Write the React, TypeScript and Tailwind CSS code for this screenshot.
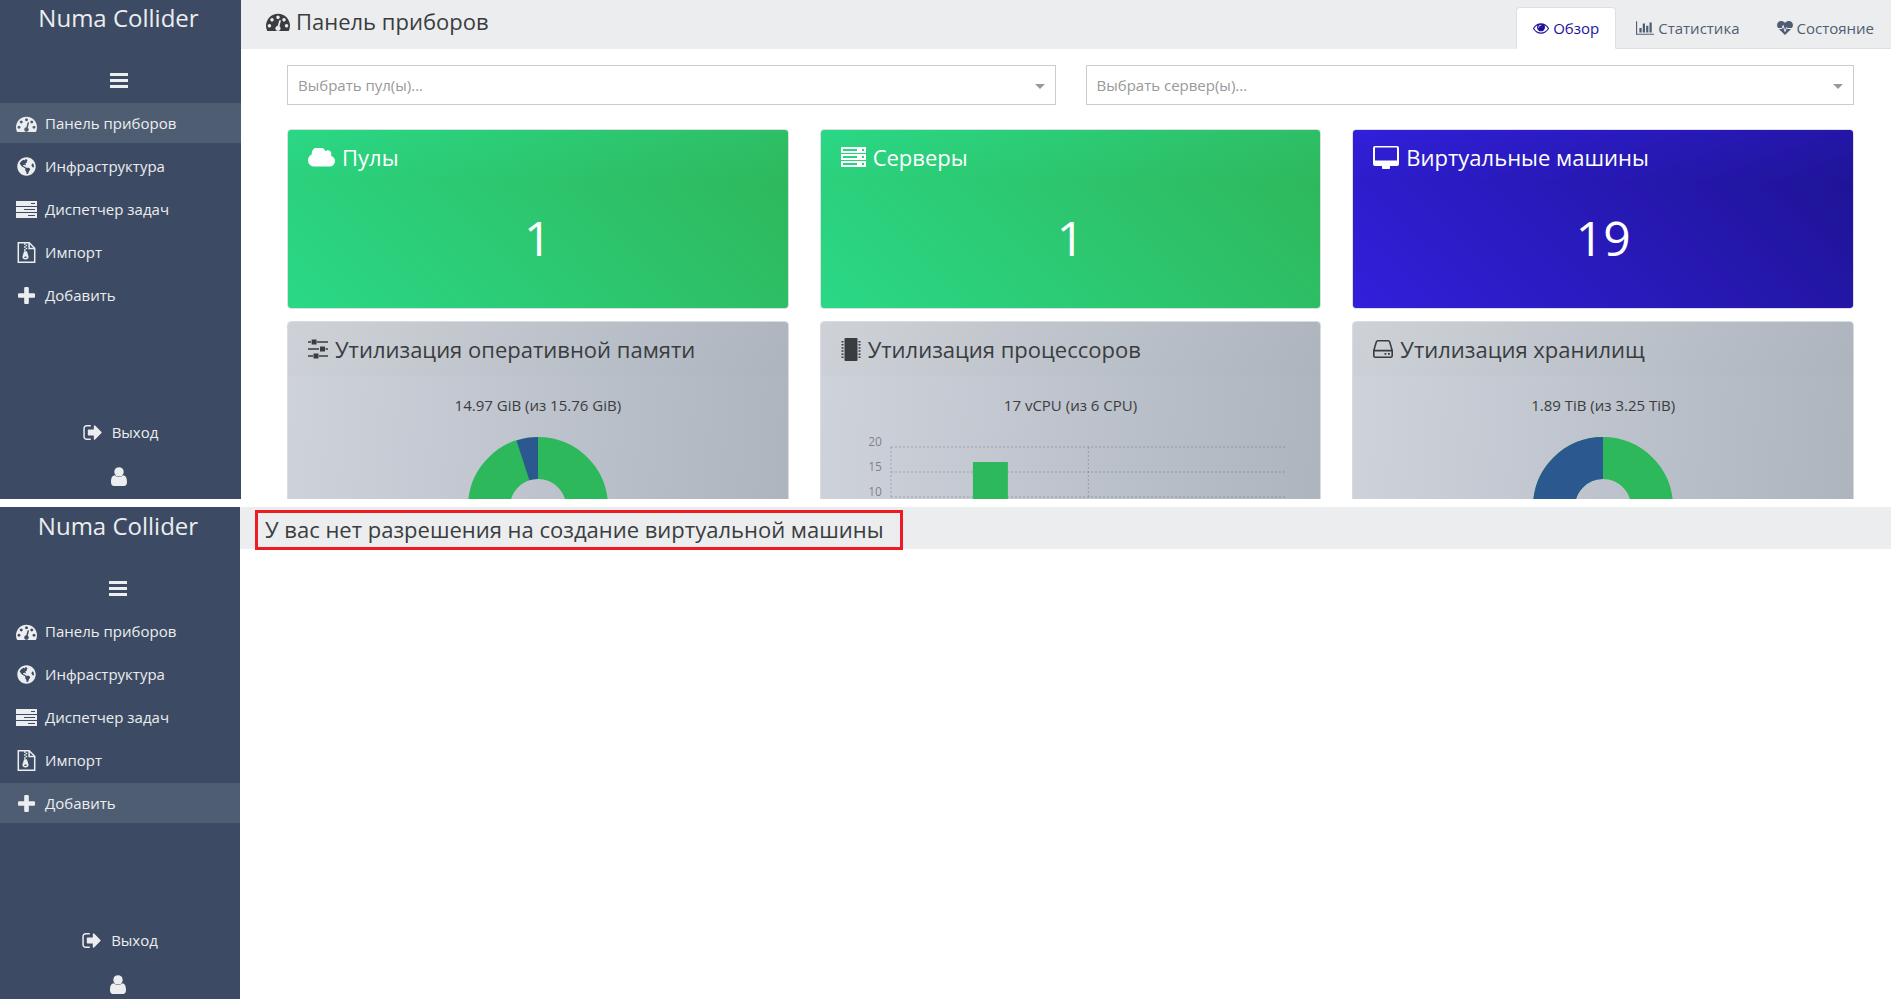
import type { ReactNode } from 'react';
import { FaGlobeAmericas } from 'react-icons/fa';

type IconProps = { className?: string };

const TachometerIcon = ({ className }: IconProps) => (
  <svg viewBox="0 128 1792 1408" className={className} fill="currentColor" aria-hidden="true">
    <path d="M384 1152q0-53-37.5-90.5t-90.5-37.5-90.5 37.5-37.5 90.5 37.5 90.5 90.5 37.5 90.5-37.5 37.5-90.5zm192-448q0-53-37.5-90.5t-90.5-37.5-90.5 37.5-37.5 90.5 37.5 90.5 90.5 37.5 90.5-37.5 37.5-90.5zm428 481l101-382q6-26-7.5-48.5t-38.5-29.5-48 6.5-30 39.5l-101 382q-60 5-107 43.5t-63 98.5q-20 77 20 146t117 89 146-20 89-117q16-60-6-117t-72-91zm660-33q0-53-37.5-90.5t-90.5-37.5-90.5 37.5-37.5 90.5 37.5 90.5 90.5 37.5 90.5-37.5 37.5-90.5zm-640-640q0-53-37.5-90.5t-90.5-37.5-90.5 37.5-37.5 90.5 37.5 90.5 90.5 37.5 90.5-37.5 37.5-90.5zm448 192q0-53-37.5-90.5t-90.5-37.5-90.5 37.5-37.5 90.5 37.5 90.5 90.5 37.5 90.5-37.5 37.5-90.5zm320 448q0 261-141 483-19 29-54 29h-1402q-35 0-54-29-141-221-141-483 0-182 71-348t191-286 286-191 348-71 348 71 286 191 191 286 71 348z" />
  </svg>
);

const TasksIcon = ({ className }: IconProps) => (
  <svg viewBox="0 0 21 17" className={className} fill="currentColor" fillRule="evenodd" aria-hidden="true">
    <path d="M0 0h21v5H0zM15 2v1h4V2zM0 6h21v5H0zM8 8v1h11V8zM0 12h21v5H0zM12 14v1h7v-1z" />
  </svg>
);

const ArchiveIcon = ({ className }: IconProps) => (
  <svg viewBox="0 0 18 21" className={className} fill="none" stroke="currentColor" strokeWidth="1.5" aria-hidden="true">
    <path d="M.8.8h10.9l5.5 5.4v14H.8z" />
    <path d="M11.6 1v5.4h5.4" />
    <path d="M6.5 2h1.6M8.1 3.5h1.6M6.5 5h1.6M8.1 6.5h1.6M6.5 8h1.6" />
    <path d="M6.6 9.3h2.8l1.6 5.2c.4 1.700-.9 3-3 3s-3.400-1.300-3-3z" fill="currentColor" stroke="none" />
    <ellipse cx="8" cy="15.200" rx="1.400" ry=".8" fill="#3c4b63" stroke="none" />
  </svg>
);

const PlusIcon = ({ className }: IconProps) => (
  <svg viewBox="192 128 1408 1408" className={className} fill="currentColor" aria-hidden="true">
    <path d="M1600 736v192q0 40-28 68t-68 28h-416v416q0 40-28 68t-68 28h-192q-40 0-68-28t-28-68v-416h-416q-40 0-68-28t-28-68v-192q0-40 28-68t68-28h416v-416q0-40 28-68t68-28h192q40 0 68 28t28 68v416h416q40 0 68 28t28 68z" />
  </svg>
);

const BarsIcon = () => (
  <svg viewBox="0 0 18 15" className="h-[15px] w-[18px]" fill="currentColor" aria-hidden="true">
    <path d="M0 0h18v3H0zM0 6h18v3H0zM0 12h18v3H0z" />
  </svg>
);

const SignOutIcon = () => (
  <svg viewBox="64 256 1568 1280" className="h-[15px] w-[19px]" fill="currentColor" aria-hidden="true">
    <path d="M704 1440q0 4 1 20t.5 26.5-3 23.5-10 19.5-20.5 6.5h-320q-119 0-203.5-84.5t-84.5-203.5v-704q0-119 84.5-203.5t203.5-84.5h320q13 0 22.5 9.5t9.5 22.5q0 4 1 20t.5 26.5-3 23.5-10 19.5-20.5 6.5h-320q-66 0-113 47t-47 113v704q0 66 47 113t113 47h312l11.5 1 11.5 3 8 5.5 7 9 2 13.5zm928-544q0 26-19 45l-544 544q-19 19-45 19t-45-19-19-45v-288h-448q-26 0-45-19t-19-45v-384q0-26 19-45t45-19h448v-288q0-26 19-45t45-19 45 19l544 544q19 19 19 45z" />
  </svg>
);

const UserIcon = () => (
  <svg viewBox="0 0 16 19" className="h-[19px] w-4" fill="currentColor" aria-hidden="true">
    <circle cx="8" cy="4.9" r="4.7" />
    <path d="M3.8 8.2C1 8.5 0 11 0 15.300 0 17.500 1.200 19 3 19h10c1.800 0 3-1.500 3-3.700 0-4.300-1-6.800-3.800-7.100a6 6 0 0 1-8.400 0z" />
  </svg>
);

const EyeIcon = () => (
  <svg viewBox="0 384 1792 1152" className="h-[11px] w-4" fill="currentColor" aria-hidden="true">
    <path d="M1664 960q-152-236-381-353 61 104 61 225 0 185-131.5 316.5t-316.5 131.5-316.5-131.5-131.5-316.5q0-121 61-225-229 117-381 353 133 205 333.5 326.5t434.5 121.5 434.5-121.5 333.5-326.5zm-720-384q0-20-14-34t-34-14q-125 0-214.5 89.5t-89.5 214.5q0 20 14 34t34 14 34-14 14-34q0-86 61-147t147-61q20 0 34-14t14-34zm848 384q0 34-20 69-140 230-376.5 368.5t-499.5 138.5-499.5-139-376.5-368q-20-35-20-69t20-69q140-229 376.5-368t499.5-139 499.5 139 376.5 368q20 35 20 69z" />
  </svg>
);

const BarChartIcon = () => (
  <svg viewBox="0 128 2048 1536" className="h-[14px] w-[18px]" fill="currentColor" aria-hidden="true">
    <path d="M640 896v512h-256v-512h256zm384-512v1024h-256v-1024h256zm1024 1152v128h-2048v-1536h128v1408h1920zm-640-896v768h-256v-768h256zm384-384v1152h-256v-1152h256z" />
  </svg>
);

const HeartbeatIcon = () => (
  <svg viewBox="0 0 16 14" className="h-[14px] w-4" aria-hidden="true">
    <path d="M8 14 1.6 7.8C-.5 5.5-.3 2.7 1.2 1.2 3-.5 6-.3 8 2c2-2.300 5-2.500 6.800-.8 1.500 1.500 1.700 4.300-.4 6.600z" fill="currentColor" />
    <path d="M1 7.500h4l1.200-3 1.800 6 1.700-4 .8 1H15" fill="none" stroke="#ecedef" strokeWidth="1" />
  </svg>
);

const CloudIcon = () => (
  <svg viewBox="64 256 1920 1280" className="h-[19px] w-[27px]" fill="currentColor" aria-hidden="true">
    <path d="M1984 1152q0 159-112.5 271.5t-271.5 112.5h-1088q-185 0-316.5-131.5t-131.5-316.5q0-132 71-241.5t187-163.5q-2-28-2-43 0-212 150-362t362-150q158 0 286.5 88t187.5 230q70-62 166-62 106 0 181 75t75 181q0 75-41 138 129 30 213 134.5t84 239.5z" />
  </svg>
);

const ServerIcon = () => (
  <svg viewBox="0 0 25 20" className="h-5 w-[25px]" fill="currentColor" fillRule="evenodd" aria-hidden="true">
    <path d="M0 0h25v6H0zM2 2v2h14V2zM21 2v2h2V2zM0 7h25v6H0zM2 9v2h14V9zM21 9v2h2V9zM0 14h25v6H0zM2 16v2h14v-2zM21 16v2h2v-2z" />
  </svg>
);

const DesktopIcon = () => (
  <svg viewBox="0 0 26 23" className="h-[23px] w-[26px]" fill="currentColor" fillRule="evenodd" aria-hidden="true">
    <path d="M2 0h22a2 2 0 0 1 2 2v16a2 2 0 0 1-2 2h-7v2.2a.8.8 0 0 1-.8.8H9.8a.8.8 0 0 1-.8-.8V20H2a2 2 0 0 1-2-2V2a2 2 0 0 1 2-2zm0 1.6v12.900h22V1.600z" />
  </svg>
);

const SlidersIcon = () => (
  <svg viewBox="0 0 20 20" className="h-5 w-5" fill="currentColor" aria-hidden="true">
    <path d="M0 2.200h3v1.600H0zM9 2.200h11v1.600H9zM3.600.5h5v5h-5zM0 9.200h11v1.600H0zM17.500 9.200H20v1.600h-2.500zM12 7.500h5v5h-5zM0 16.200h5v1.600H0zM11 16.200h9v1.600h-9zM5.500 14.500h5v5h-5z" />
  </svg>
);

const MicrochipIcon = () => (
  <svg viewBox="0 0 20 23" className="h-[23px] w-5" fill="currentColor" aria-hidden="true">
    <rect x="3.5" width="13" height="23" rx="1" />
    <path d="M1.500 3v17M18.500 3v17" stroke="currentColor" strokeWidth="2" strokeDasharray="1.500 1.600" />
  </svg>
);

const HddIcon = () => (
  <svg viewBox="0 0 20 18" className="h-[18px] w-5" fill="none" stroke="currentColor" strokeWidth="1.6" aria-hidden="true">
    <path d="M.8 10.500v5.200c0 1 .5 1.500 1.500 1.500h15.400c1 0 1.500-.5 1.500-1.500v-5.200L16.700 2c-.3-.8-.8-1.200-1.600-1.200H4.900c-.8 0-1.300.4-1.600 1.200zM.8 10.600h18.400" />
    <path d="M11.500 13.900h1.800M15 13.900h1.800" strokeWidth="1.8" />
  </svg>
);

const menu = [
  { label: 'Панель приборов', icon: <TachometerIcon className="h-[17px] w-[21px]" /> },
  { label: 'Инфраструктура', icon: <FaGlobeAmericas className="size-[19px]" /> },
  { label: 'Диспетчер задач', icon: <TasksIcon className="h-[17px] w-[21px]" /> },
  { label: 'Импорт', icon: <ArchiveIcon className="h-[21px] w-[19px]" /> },
  { label: 'Добавить', icon: <PlusIcon className="size-[17px]" /> },
];

const Sidebar = ({ active, className }: { active: string; className: string }) => (
  <nav className={`flex shrink-0 flex-col bg-[#3c4b63] text-[#ecedef] ${className}`}>
    <div className="pr-1 text-center text-2xl leading-9">Numa Collider</div>
    <div className="mt-7 flex h-8 justify-center pr-1">
      <button type="button" aria-label="Меню" className="flex size-8 items-center justify-center">
        <BarsIcon />
      </button>
    </div>
    <ul className="mt-[7px] flex flex-col gap-[3px]">
      {menu.map((item) => (
        <li key={item.label}>
          <a
            href="#"
            className={`flex h-10 items-center pl-4 text-[15px] ${item.label === active ? 'bg-[#4f5d73]' : ''}`}
          >
            <span className="mr-2 flex w-[21px] justify-center">{item.icon}</span>
            {item.label}
          </a>
        </li>
      ))}
    </ul>
    <div className="mt-[97px] flex flex-col items-center">
      <a href="#" className="flex h-10 items-center gap-[10px] text-[15px]">
        <SignOutIcon />
        Выход
      </a>
      <button type="button" aria-label="Пользователь" className="mt-1 mr-1 flex h-10 items-center">
        <UserIcon />
      </button>
    </div>
  </nav>
);

const Tab = ({ icon, label, active }: { icon: ReactNode; label: string; active?: boolean }) => (
  <button
    type="button"
    role="tab"
    aria-selected={!!active}
    className={`-mb-px flex h-[42px] items-center gap-1 rounded-t border px-4 text-[15px] ${
      active ? 'border-[#dddfe2] border-b-white bg-white text-[#20129a]' : 'border-transparent text-[#4f5d73]'
    }`}
  >
    {icon}
    {label}
  </button>
);

const Filter = ({ label, placeholder }: { label: string; placeholder: string }) => (
  <div className="relative">
    <select
      aria-label={label}
      className="h-10 w-full appearance-none border border-[#ccc] bg-white px-[10px] text-[15px] text-[#999]"
    >
      <option>{placeholder}</option>
    </select>
    <span className="pointer-events-none absolute top-[19px] right-[11px] border-x-[5px] border-t-[5px] border-x-transparent border-t-[#999]" />
  </div>
);

const CountCard = ({ icon, title, count, tone }: { icon: ReactNode; title: string; count: number; tone: 'green' | 'blue' }) => (
  <div className="flex h-[180px] flex-col overflow-hidden rounded border border-[#dddfe2] text-white">
    <h3
      className={`flex h-[54px] items-center gap-[7px] px-5 text-[22px] ${
        tone === 'green' ? 'bg-linear-160 from-[#2ad886] to-[#2eb85c]' : 'bg-linear-160 from-[#321fdb] to-[#1f1498]'
      }`}
    >
      {icon}
      {title}
    </h3>
    <p
      className={`flex-1 pt-[30px] text-center text-5xl ${
        tone === 'green' ? 'bg-linear-45 from-[#2ad886] to-[#2eb85c]' : 'bg-linear-45 from-[#321fdb] to-[#1f1498]'
      }`}
    >
      {count}
    </p>
  </div>
);

const UsageCard = ({ icon, title, usage, children }: { icon: ReactNode; title: string; usage: string; children: ReactNode }) => (
  <div className="flex h-[300px] flex-col overflow-hidden rounded border border-[#d8dbdf] text-[#3a3d40]">
    <h3 className="flex h-[54px] items-center gap-[7px] bg-linear-120 from-[#ced2d8] to-[#adb4be] px-5 text-[22px]">
      {icon}
      {title}
    </h3>
    <div className="flex-1 bg-linear-95 from-[#ced2db] to-[#adb4be]">
      <p className="pt-[17px] text-center text-[15px] leading-6">{usage}</p>
      {children}
    </div>
  </div>
);

// share of the ring is taken clockwise from 12 o'clock
const Donut = ({ share }: { share: number }) => (
  <svg viewBox="0 0 140 140" className="mx-auto mt-5 size-[140px]" fill="none" strokeWidth="42" aria-hidden="true">
    <circle cx="70" cy="70" r="49" stroke="#2eb85c" />
    <circle
      cx="70"
      cy="70"
      r="49"
      stroke="#2c5890"
      pathLength={100}
      strokeDasharray={`${100 - share} ${share}`}
      strokeDashoffset={-share}
      transform="rotate(-90 70 70)"
    />
  </svg>
);

const CpuChart = () => (
  <svg className="mt-2 h-[170px] w-full" aria-hidden="true">
    <g stroke="#000" strokeOpacity="0.2" strokeDasharray="2 2">
      <line x1="14%" x2="93%" y1="22" y2="22" />
      <line x1="14%" x2="93%" y1="47" y2="47" />
      <line x1="14%" x2="93%" y1="72" y2="72" />
      <line x1="14%" x2="14%" y1="22" y2="170" />
      <line x1="53.5%" x2="53.5%" y1="22" y2="170" />
    </g>
    <rect x="30.4%" y="37" width="7%" height="135" fill="#2eb85c" />
    <g fontSize="12" fill="#000" fillOpacity="0.4" textAnchor="end">
      <text x="12.2%" y="21">20</text>
      <text x="12.2%" y="46">15</text>
      <text x="12.2%" y="71">10</text>
    </g>
  </svg>
);

const Dashboard = () => (
  <section className="flex h-[499px] overflow-hidden">
    <Sidebar active="Панель приборов" className="w-[241px]" />
    <div className="min-w-0 flex-1">
      <header className="flex h-[49px] items-end justify-between bg-[#ecedef]">
        <h1 className="flex h-[49px] items-center gap-[6px] pb-[6px] pl-[25px] text-[22px] text-[#3a3d40]">
          <TachometerIcon className="h-[19px] w-6" />
          Панель приборов
        </h1>
        <div role="tablist" className="flex gap-[3px] border-b border-[#dddfe2]">
          <Tab active icon={<EyeIcon />} label="Обзор" />
          <Tab icon={<BarChartIcon />} label="Статистика" />
          <Tab icon={<HeartbeatIcon />} label="Состояние" />
        </div>
      </header>
      <main className="pt-4 pr-[37px] pl-[46px]">
        <div className="grid grid-cols-2 gap-[30px]">
          <Filter label="Пулы" placeholder="Выбрать пул(ы)..." />
          <Filter label="Серверы" placeholder="Выбрать сервер(ы)..." />
        </div>
        <div className="mt-6 grid grid-cols-3 gap-x-[31px] gap-y-3">
          <CountCard tone="green" icon={<CloudIcon />} title="Пулы" count={1} />
          <CountCard tone="green" icon={<ServerIcon />} title="Серверы" count={1} />
          <CountCard tone="blue" icon={<DesktopIcon />} title="Виртуальные машины" count={19} />
          <UsageCard icon={<SlidersIcon />} title="Утилизация оперативной памяти" usage="14.97 GiB (из 15.76 GiB)">
            <Donut share={95} />
          </UsageCard>
          <UsageCard icon={<MicrochipIcon />} title="Утилизация процессоров" usage="17 vCPU (из 6 CPU)">
            <CpuChart />
          </UsageCard>
          <UsageCard icon={<HddIcon />} title="Утилизация хранилищ" usage="1.89 TiB (из 3.25 TiB)">
            {/* the chart counts half of the space as used */}
            <Donut share={50} />
          </UsageCard>
        </div>
      </main>
    </div>
  </section>
);

const NewVm = () => (
  <section className="flex h-[492px] overflow-hidden">
    <Sidebar active="Добавить" className="w-60 pt-px" />
    <div className="min-w-0 flex-1">
      <header className="flex h-[42px] bg-[#ecedef] pt-[3px] pl-[15px]">
        <h1 className="flex h-10 items-center border-3 border-[#ed1c24] pr-4 pb-[2px] pl-[7px] text-[22px] text-[#3a3d40]">
          У вас нет разрешения на создание виртуальной машины
        </h1>
      </header>
    </div>
  </section>
);

export default function App() {
  return (
    <div className="flex flex-col gap-2 bg-white font-['Open_Sans','Noto_Sans',sans-serif]">
      <Dashboard />
      <NewVm />
    </div>
  );
}
